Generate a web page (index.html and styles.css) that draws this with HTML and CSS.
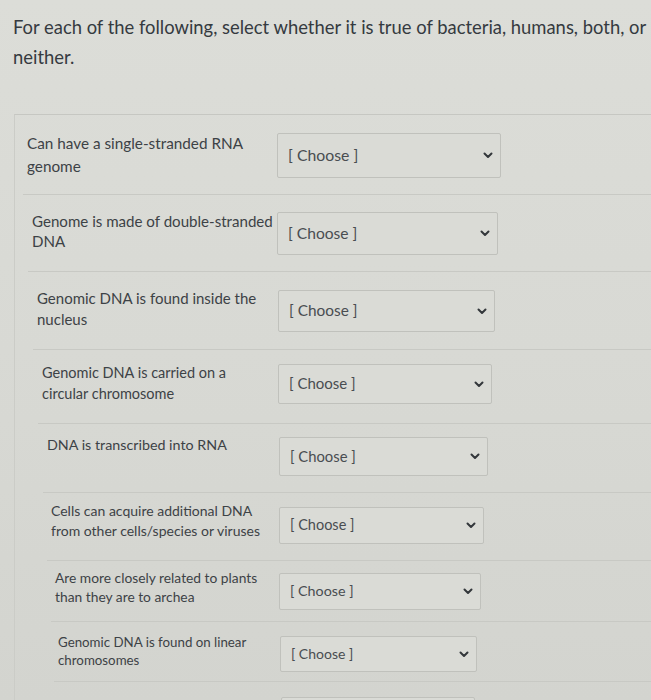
FILE: index.html
```html
<!DOCTYPE html>
<html lang="en">
<head>
<meta charset="utf-8">
<title>Matching question</title>
<link rel="stylesheet" href="styles.css">
</head>
<body>
<div class="page">
  <p class="prompt">For each of the following, select whether it is true of bacteria, humans, both, or neither.</p>
  <div class="table">
    <div class="row">
      <div class="label">Can have a single-stranded RNA genome</div>
      <div class="select"><span>[ Choose ]</span><svg class="chev" viewBox="0 0 10 7"><path d="M1.5 1.5 L5 5 L8.5 1.5"/></svg></div>
    </div>
    <div class="row">
      <div class="label">Genome is made of double-stranded DNA</div>
      <div class="select"><span>[ Choose ]</span><svg class="chev" viewBox="0 0 10 7"><path d="M1.5 1.5 L5 5 L8.5 1.5"/></svg></div>
    </div>
    <div class="row">
      <div class="label">Genomic DNA is found inside the nucleus</div>
      <div class="select"><span>[ Choose ]</span><svg class="chev" viewBox="0 0 10 7"><path d="M1.5 1.5 L5 5 L8.5 1.5"/></svg></div>
    </div>
    <div class="row">
      <div class="label">Genomic DNA is carried on a circular chromosome</div>
      <div class="select"><span>[ Choose ]</span><svg class="chev" viewBox="0 0 10 7"><path d="M1.5 1.5 L5 5 L8.5 1.5"/></svg></div>
    </div>
    <div class="row">
      <div class="label">DNA is transcribed into RNA</div>
      <div class="select"><span>[ Choose ]</span><svg class="chev" viewBox="0 0 10 7"><path d="M1.5 1.5 L5 5 L8.5 1.5"/></svg></div>
    </div>
    <div class="row">
      <div class="label">Cells can acquire additional DNA from other cells/species or viruses</div>
      <div class="select"><span>[ Choose ]</span><svg class="chev" viewBox="0 0 10 7"><path d="M1.5 1.5 L5 5 L8.5 1.5"/></svg></div>
    </div>
    <div class="row">
      <div class="label">Are more closely related to plants than they are to archea</div>
      <div class="select"><span>[ Choose ]</span><svg class="chev" viewBox="0 0 10 7"><path d="M1.5 1.5 L5 5 L8.5 1.5"/></svg></div>
    </div>
    <div class="row">
      <div class="label">Genomic DNA is found on linear chromosomes</div>
      <div class="select"><span>[ Choose ]</span><svg class="chev" viewBox="0 0 10 7"><path d="M1.5 1.5 L5 5 L8.5 1.5"/></svg></div>
    </div>
    <div class="row">
      <div class="label"></div>
      <div class="select"></div>
    </div>
  </div>
</div>
</body>
</html>
```

FILE: styles.css
```css
html, body {
  margin: 0;
  padding: 0;
}

body {
  background: linear-gradient(180deg, #dcddd8 0%, #d8d9d4 50%, #d3d4cf 100%);
  font-family: Lato, "Open Sans", "Liberation Sans", sans-serif;
  color: #3b3f44;
  width: 651px;
  height: 700px;
  overflow: hidden;
}

.page {
  padding: 12px 0 0 0;
}

.prompt {
  margin: 0;
  padding: 0 2px 0 13px;
  font-size: 18.4px;
  line-height: 30px;
  color: #353a40;
}

.table {
  margin: 42px 0 0 14px;
  border-top: 1px solid #c6c7c2;
  border-left: 1px solid #cbccc7;
}

.row {
  --x: 12px;
  --h: 80px;
  --tt: 17px;
  --lh: 23px;
  --fs: 15.3px;
  --lw: 250px;
  --st: 18px;
  --sw: 224px;
  --sh: 45px;
  --sfs: 15.8px;
  display: flex;
  align-items: flex-start;
  box-sizing: border-box;
  height: var(--h);
  margin-left: calc(var(--x) - 4px);
  padding-left: 4px;
  border-bottom: 1px solid #c8c9c4;
}

.row:nth-child(2) { --x: 17px; --h: 77px; --tt: 16px; --lh: 20px; --fs: 15.1px; --lw: 245px; --st: 17px; --sw: 221px; --sh: 43px; --sfs: 15.6px; }
.row:nth-child(3) { --x: 22px; --h: 78px; --tt: 16px; --lh: 21px; --fs: 15px; --lw: 241px; --st: 18px; --sw: 217px; --sh: 42px; --sfs: 15.4px; }
.row:nth-child(4) { --x: 27px; --h: 74px; --tt: 12px; --lh: 21px; --fs: 14.5px; --lw: 236px; --st: 14px; --sw: 214px; --sh: 40px; --sfs: 15px; }
.row:nth-child(4) .label { padding-right: 12px; }
.row:nth-child(5) { --x: 32px; --h: 69px; --tt: 11px; --lh: 20px; --fs: 14.3px; --lw: 232px; --st: 13px; --sw: 209px; --sh: 39px; --sfs: 14.8px; }
.row:nth-child(6) { --x: 36px; --h: 68px; --tt: 8px; --lh: 20px; --fs: 14px; --lw: 228px; --st: 14px; --sw: 205px; --sh: 37px; --sfs: 14.5px; }
.row:nth-child(7) { --x: 40px; --h: 61px; --tt: 7px; --lh: 19px; --fs: 13.8px; --lw: 224px; --st: 12px; --sw: 202px; --sh: 37px; --sfs: 14.3px; }
.row:nth-child(8) { --x: 43px; --h: 60px; --tt: 11px; --lh: 18px; --fs: 13.3px; --lw: 222px; --st: 14px; --sw: 197px; --sh: 36px; --sfs: 14px; }
.row:nth-child(9) { --x: 46px; --h: 60px; --tt: 11px; --lh: 18px; --fs: 13px; --lw: 220px; --st: 15px; --sw: 194px; --sh: 36px; --sfs: 14px; border-bottom: none; }

.label {
  flex: none;
  box-sizing: border-box;
  width: var(--lw);
  margin-top: var(--tt);
  font-size: var(--fs);
  line-height: var(--lh);
  color: #3d4246;
}

.select {
  flex: none;
  box-sizing: border-box;
  display: flex;
  align-items: center;
  justify-content: space-between;
  width: var(--sw);
  height: var(--sh);
  margin-top: var(--st);
  padding: 0 7px 0 10px;
  border: 1px solid #c0c1bc;
  border-radius: 2px;
  background: #dadbd6;
  font-size: var(--sfs);
  color: #494d51;
}

.select span {
  margin-top: -2px;
}

.chev {
  width: 10px;
  height: 7px;
}

.chev path {
  fill: none;
  stroke: #33373b;
  stroke-width: 2;
  stroke-linecap: round;
  stroke-linejoin: round;
}
```
